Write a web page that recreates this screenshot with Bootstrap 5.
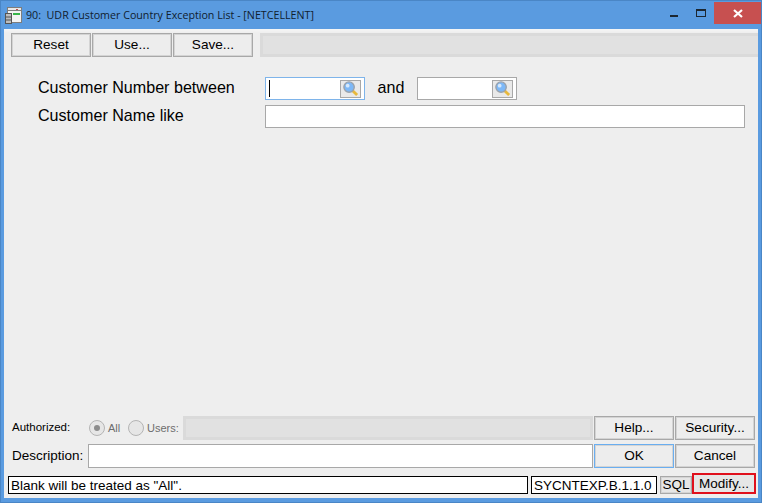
<!DOCTYPE html>
<html lang="en">
<head>
<meta charset="utf-8">
<title>UDR Customer Country Exception List</title>
<link href="https://cdn.jsdelivr.net/npm/bootstrap@5.3.0/dist/css/bootstrap.min.css" rel="stylesheet">
<style>
html,body{margin:0;background:#5a9be0;overflow:hidden}
body{font-family:"Liberation Sans",Arial,sans-serif;color:#000}
.app-win{width:762px;height:503px;background:#5a9be0;border:1px solid #4a86c6}
.app-title{height:28px;padding-left:4px;color:#10202f}
.app-title .ttl{margin-left:4px;font-family:"Open Sans","Liberation Sans",sans-serif;font-size:10.7px}
.ctl-min{width:8px;height:2px;background:#1c2732;margin-left:auto;align-self:flex-start;margin-top:14px}
.ctl-max{width:10px;height:8px;border:1px solid #1c2732;border-top-width:2px;margin-left:18px;align-self:flex-start;margin-top:8px}
.ctl-close{width:47px;height:22px;background:#c75050;margin-left:8px;align-self:flex-start;margin-top:1px}
.app-body{width:754px;height:469px;margin-left:3px;background:#eeeeee}
.tbar{height:32px;padding:4px 0 4px 7px;background:linear-gradient(#f6f6f6 0,#eeeeee 4px)}
.wbtn{background:#ededed;border:1px solid #a8a8a8;box-shadow:inset 0 0 0 1px #d4d4d4;font-size:13.6px;line-height:1;color:#000;padding:0;display:flex;align-items:center;justify-content:center;border-radius:0;height:24px;flex-shrink:0}
.b80{width:80px;margin-right:1px}
.tfill{flex:1;margin-left:6px;background:#e1e1e1;border:3px solid #dadada;border-right:0}
.frm{padding:14px 0 0 34px;font-size:16.1px}
.frow{height:27px;margin-bottom:1px}
.flab{width:227px;flex-shrink:0;padding-bottom:2px}
.fld{height:23px;background:#fff;border:1px solid #a8a8a8;flex-shrink:0}
.fld.foc{border-color:#7eb4ea}
.fshort{width:100px}
.fwide{width:480px}
.caret-bar{width:1px;height:17px;background:#000;margin-left:3px}
.mag{width:21px;height:18px;margin-left:auto;margin-right:3px;background:#e9e9e9;border:1px solid #a8a8a8}
.mag svg{overflow:visible}
.andlab{width:52px;text-align:center;padding-bottom:2px}
.lower{padding:0 3px 0 8px}
.lrow1{height:24px}
.authlab{width:77px;font-size:11.5px;flex-shrink:0}
.rad{width:16px;height:16px;border-radius:50%;background:#e6e6e6;border:1px solid #b4b4b4;display:flex;align-items:center;justify-content:center;flex-shrink:0}
.rad i{width:6px;height:6px;border-radius:50%;background:#8c8c8c;display:block}
.radlab{font-size:11px;color:#6d6d6d;padding-left:3px;flex-shrink:0}
.rl1{width:23px}
.rl2{width:39px}
.grayf{width:410px;height:24px;background:#e1e1e1;border:3px solid #dadada;flex-shrink:0}
.b79{width:80px;margin-left:1px}
.lrow2{height:24px;margin-top:4px}
.desclab{width:76px;font-size:13.5px;flex-shrink:0;white-space:nowrap}
.descf{width:505px;height:24px;background:#fff;border:1px solid #a8a8a8;flex-shrink:0}
.okb{border-color:#6aaef0}
.stat{margin-top:5px;margin-bottom:4px;padding-left:4px;height:21px;font-size:13.5px}
.sbox{height:18px;margin-top:3px;background:#fff;border:1px solid #000;line-height:17px;padding-left:2px;white-space:nowrap;overflow:hidden;flex-shrink:0}
.s1{width:520px;margin-right:3px}
.s2{width:126px;margin-right:3px}
.sqlb{width:32px;height:18px;margin-top:3px;background:#e6e6e6;font-size:13.5px}
.modb{width:64px;height:21px;border:2px solid #e0101c;background:#e6e6e6;display:flex;align-items:center;justify-content:center;flex-shrink:0;padding-top:2px}
</style>
</head>
<body>
<div class="app-win">
  <div class="app-title d-flex align-items-center">
    <svg width="17" height="17" viewBox="0 0 17 17"><rect x="2.500" y="0.500" width="14" height="15" fill="#f3f3f3" stroke="#7d7d7d"/><rect x="2.500" y="0.500" width="14" height="3" fill="#e8e8e8" stroke="#7d7d7d"/><rect x="11" y="2" width="2" height="1" fill="#c0504d"/><rect x="0.500" y="6.500" width="6" height="10" fill="#bdbdbd" stroke="#555"/><path d="M1 10h5M1 13h5" stroke="#555"/><rect x="8" y="6" width="7" height="2" fill="#38b54a"/></svg>
    <span class="ttl">90:&nbsp; UDR Customer Country Exception List - [NETCELLENT]</span>
    <span class="ctl-min"></span>
    <span class="ctl-max"></span>
    <span class="ctl-close d-flex align-items-center justify-content-center">
      <svg width="10" height="9" viewBox="0 0 10 9"><path d="M1 1l8 7M9 1L1 8" stroke="#fff" stroke-width="2.2"/></svg>
    </span>
  </div>
  <div class="app-body d-flex flex-column">
    <div class="tbar d-flex">
      <button class="wbtn b80" type="button">Reset</button>
      <button class="wbtn b80" type="button">Use...</button>
      <button class="wbtn b80" type="button">Save...</button>
      <div class="tfill"></div>
    </div>
    <div class="frm flex-grow-1">
      <div class="frow d-flex align-items-center">
        <div class="flab">Customer Number between</div>
        <div class="fld foc fshort d-flex align-items-center">
          <span class="caret-bar"></span>
          <span class="mag d-flex align-items-center justify-content-center">
            <svg width="17" height="17" viewBox="0 0 18 18"><path d="M11 11l5 5" stroke="#e8b93c" stroke-width="3"/><circle cx="7.500" cy="7.500" r="5.500" fill="#7db8f7" stroke="#9aa2ac" stroke-width="1.500"/><circle cx="6" cy="6" r="2" fill="#d6e9fc"/></svg>
          </span>
        </div>
        <div class="andlab">and</div>
        <div class="fld fshort d-flex align-items-center">
          <span class="mag d-flex align-items-center justify-content-center">
            <svg width="17" height="17" viewBox="0 0 18 18"><path d="M11 11l5 5" stroke="#e8b93c" stroke-width="3"/><circle cx="7.500" cy="7.500" r="5.500" fill="#7db8f7" stroke="#9aa2ac" stroke-width="1.500"/><circle cx="6" cy="6" r="2" fill="#d6e9fc"/></svg>
          </span>
        </div>
      </div>
      <div class="frow d-flex align-items-center">
        <div class="flab">Customer Name like</div>
        <div class="fld fwide"></div>
      </div>
    </div>
    <div class="lower">
      <div class="lrow1 d-flex align-items-center">
        <div class="authlab">Authorized:</div>
        <span class="rad"><i></i></span><span class="radlab rl1">All</span>
        <span class="rad"></span><span class="radlab rl2">Users:</span>
        <div class="grayf"></div>
        <button class="wbtn b79" type="button">Help...</button>
        <button class="wbtn b79" type="button">Security...</button>
      </div>
      <div class="lrow2 d-flex align-items-center">
        <div class="desclab">Description:</div>
        <div class="descf"></div>
        <button class="wbtn b79 okb" type="button">OK</button>
        <button class="wbtn b79" type="button">Cancel</button>
      </div>
    </div>
    <div class="stat d-flex align-items-start">
      <div class="sbox s1">Blank will be treated as "All".</div>
      <div class="sbox s2">SYCNTEXP.B.1.1.0</div>
      <button class="wbtn sqlb" type="button">SQL</button>
      <div class="modb">Modify...</div>
    </div>
  </div>
</div>
<script src="https://cdn.jsdelivr.net/npm/bootstrap@5.3.0/dist/js/bootstrap.bundle.min.js"></script>
</body>
</html>
